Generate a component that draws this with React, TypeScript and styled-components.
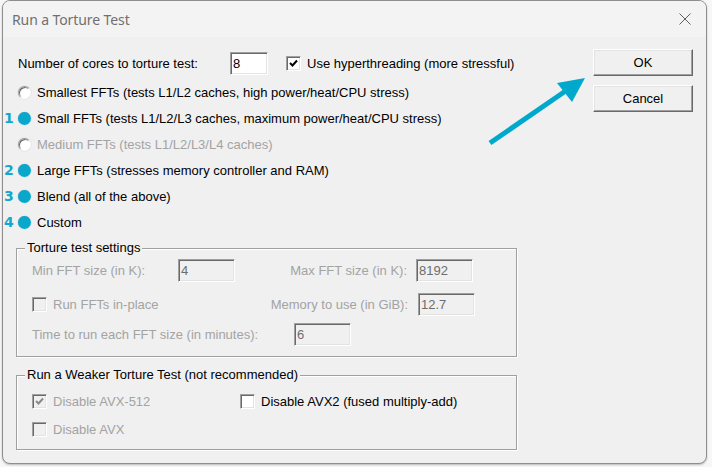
import styled, { createGlobalStyle } from 'styled-components';

const GlobalStyle = createGlobalStyle`
  html, body {
    margin: 0;
    padding: 0;
    background: #f7f7f7;
  }
  body {
    font-family: "Liberation Sans", Arial, sans-serif;
    font-size: 13px;
    color: #000;
  }
`;

interface RadioItem {
  label: string;
  note?: string;
  marked?: boolean;
  disabled?: boolean;
}

const radios: RadioItem[] = [
  { label: 'Smallest FFTs (tests L1/L2 caches, high power/heat/CPU stress)' },
  {
    label: 'Small FFTs (tests L1/L2/L3 caches, maximum power/heat/CPU stress)',
    note: '1',
    marked: true,
  },
  { label: 'Medium FFTs (tests L1/L2/L3/L4 caches)', disabled: true },
  { label: 'Large FFTs (stresses memory controller and RAM)', note: '2', marked: true },
  { label: 'Blend (all of the above)', note: '3', marked: true },
  { label: 'Custom', note: '4', marked: true },
];

const Check = ({ checked, disabled }: { checked?: boolean; disabled?: boolean }) => (
  <CheckBox $disabled={disabled}>
    {checked && (
      <svg width="9" height="9" viewBox="0 0 9 9">
        <polyline
          points="1,4 3.5,6.5 8,1.5"
          fill="none"
          stroke={disabled ? '#8a8a8a' : '#000'}
          strokeWidth="2"
        />
      </svg>
    )}
  </CheckBox>
);

const App = () => {
  return (
    <Stage>
      <GlobalStyle />
      <Window>
        {/* title */}
        <TitleBar>
          <Title>Run a Torture Test</Title>
          <svg width="12" height="12" viewBox="0 0 12 12">
            <path d="M0.5 0.5 L11.5 11.5 M11.5 0.5 L0.5 11.5" stroke="#5f5f5f" strokeWidth="1" />
          </svg>
        </TitleBar>

        <Body>
          <MainColumn>
            <TopRow>
              <FieldLabel $width={212}>Number of cores to torture test:</FieldLabel>
              <TextBox $width={38}>8</TextBox>
              <CheckRow style={{ marginLeft: 18 }}>
                <Check checked />
                <span>Use hyperthreading (more stressful)</span>
              </CheckRow>
            </TopRow>

            <RadioList>
              {radios.map((r) => (
                <RadioRow key={r.label} $disabled={r.disabled}>
                  <Note>{r.note}</Note>
                  <Radio $marked={r.marked} />
                  <span>{r.label}</span>
                </RadioRow>
              ))}
            </RadioList>

            {/* torture test settings */}
            <GroupBox $top={13} $pad="10px 0 10px 15px">
              <GroupTitle>Torture test settings</GroupTitle>
              <GroupRow>
                <FieldLabel $width={146} $disabled>Min FFT size (in K):</FieldLabel>
                <TextBox $width={57} $disabled>4</TextBox>
                <FieldLabel $width={172} $disabled $right>Max FFT size (in K):</FieldLabel>
                <TextBox $width={57} $disabled style={{ marginLeft: 9 }}>8192</TextBox>
              </GroupRow>
              <GroupRow $gap={11}>
                <CheckRow $disabled $width={236}>
                  <Check disabled />
                  <span>Run FFTs in-place</span>
                </CheckRow>
                <FieldLabel $width={140} $disabled $right>Memory to use (in GiB):</FieldLabel>
                <TextBox $width={57} $disabled style={{ marginLeft: 10 }}>12.7</TextBox>
              </GroupRow>
              <GroupRow $gap={7}>
                <FieldLabel $width={262} $disabled>Time to run each FFT size (in minutes):</FieldLabel>
                <TextBox $width={57} $disabled>6</TextBox>
              </GroupRow>
            </GroupBox>

            {/* weaker test */}
            <GroupBox $top={18} $pad="18px 0 12px 15px">
              <GroupTitle>Run a Weaker Torture Test (not recommended)</GroupTitle>
              <CheckGrid>
                <CheckRow $disabled $width={208}>
                  <Check checked disabled />
                  <span>Disable AVX-512</span>
                </CheckRow>
                <CheckRow>
                  <Check />
                  <span>Disable AVX2 (fused multiply-add)</span>
                </CheckRow>
              </CheckGrid>
              <CheckGrid $gap={13}>
                <CheckRow $disabled>
                  <Check disabled />
                  <span>Disable AVX</span>
                </CheckRow>
              </CheckGrid>
            </GroupBox>
          </MainColumn>

          <ButtonColumn>
            <PushButton>OK</PushButton>
            <PushButton>Cancel</PushButton>
          </ButtonColumn>
        </Body>
      </Window>

      {/* annotation arrow */}
      <Overlay width="712" height="467" viewBox="0 0 712 467">
        <line x1="490" y1="143" x2="567" y2="90" stroke="#00a9cc" strokeWidth="5" />
        <polygon points="585,78 557,83 572,102" fill="#00a9cc" />
      </Overlay>
    </Stage>
  );
};

// layout
const Stage = styled.div`
  position: relative;
  width: 712px;
  height: 467px;
  overflow: hidden;
  padding: 0 0 0 2px;
  box-sizing: border-box;
`;

const Window = styled.div`
  width: 705px;
  height: 464px;
  box-sizing: border-box;
  border: 1px solid #8e8e8e;
  border-radius: 8px;
  background: #f0f0f0;
  overflow: hidden;
  display: flex;
  flex-direction: column;
  box-shadow: 0 1px 2px rgba(0, 0, 0, 0.25);
`;

const TitleBar = styled.div`
  height: 36px;
  flex: none;
  display: flex;
  align-items: center;
  justify-content: space-between;
  padding: 0 15px 0 9px;
  background: #f3f3f3;
`;

const Title = styled.span`
  font-family: "Noto Sans", "Open Sans", sans-serif;
  font-size: 14px;
  color: #707070;
  letter-spacing: -0.1px;
`;

const Body = styled.div`
  display: flex;
  padding: 12px 13px 0 0;
`;

const MainColumn = styled.div`
  flex: 1;
  display: flex;
  flex-direction: column;
`;

const ButtonColumn = styled.div`
  display: flex;
  flex-direction: column;
  gap: 9px;
`;

const TopRow = styled.div`
  display: flex;
  align-items: center;
  height: 26px;
  margin-top: 1px;
  padding-left: 15px;
`;

const RadioList = styled.div`
  display: flex;
  flex-direction: column;
  margin-top: 3px;
`;

const RadioRow = styled.div<{ $disabled?: boolean }>`
  display: flex;
  align-items: center;
  height: 26px;
  color: ${(p) => (p.$disabled ? '#a3a3a3' : '#000')};
`;

const GroupBox = styled.div<{ $top: number; $pad: string }>`
  position: relative;
  width: 501px;
  box-sizing: border-box;
  margin: ${(p) => p.$top}px 0 0 13px;
  padding: ${(p) => p.$pad};
  border: 1px solid #a0a0a0;
  box-shadow: 1px 1px 0 #fff, inset 1px 1px 0 #fff;
`;

const GroupRow = styled.div<{ $gap?: number }>`
  display: flex;
  align-items: center;
  height: 23px;
  margin-top: ${(p) => p.$gap || 0}px;
`;

const CheckGrid = styled.div<{ $gap?: number }>`
  display: flex;
  align-items: center;
  height: 15px;
  margin-top: ${(p) => p.$gap || 0}px;
`;

// text
const GroupTitle = styled.span`
  position: absolute;
  top: -9px;
  left: 8px;
  padding: 0 2px;
  background: #f0f0f0;
  line-height: 16px;
`;

const FieldLabel = styled.span<{ $width: number; $disabled?: boolean; $right?: boolean }>`
  width: ${(p) => p.$width}px;
  flex: none;
  text-align: ${(p) => (p.$right ? 'right' : 'left')};
  color: ${(p) => (p.$disabled ? '#a3a3a3' : '#000')};
  white-space: nowrap;
`;

const Note = styled.span`
  width: 15px;
  flex: none;
  padding-left: 1px;
  box-sizing: border-box;
  font-family: "DejaVu Sans", sans-serif;
  font-weight: bold;
  font-size: 14px;
  color: #14a6cf;
`;

// component
const TextBox = styled.div<{ $width: number; $disabled?: boolean }>`
  width: ${(p) => p.$width}px;
  height: 23px;
  flex: none;
  box-sizing: border-box;
  padding: 0 2px;
  display: flex;
  align-items: center;
  background: ${(p) => (p.$disabled ? '#f0f0f0' : '#fff')};
  color: ${(p) => (p.$disabled ? '#6d6d6d' : '#000')};
  border: 1px solid;
  border-color: #a0a0a0 #fff #fff #a0a0a0;
  box-shadow: inset 1px 1px 0 #696969, inset -1px -1px 0 #e3e3e3;
`;

const CheckRow = styled.div<{ $disabled?: boolean; $width?: number }>`
  display: flex;
  align-items: center;
  gap: 6px;
  ${(p) => (p.$width ? `width: ${p.$width}px; flex: none;` : '')}
  color: ${(p) => (p.$disabled ? '#a3a3a3' : '#000')};
`;

const CheckBox = styled.span<{ $disabled?: boolean }>`
  width: 15px;
  height: 15px;
  flex: none;
  box-sizing: border-box;
  display: flex;
  align-items: center;
  justify-content: center;
  background: ${(p) => (p.$disabled ? '#f0f0f0' : '#fff')};
  border: 1px solid;
  border-color: #a0a0a0 #fff #fff #a0a0a0;
  box-shadow: inset 1px 1px 0 #696969, inset -1px -1px 0 #e3e3e3;
`;

const Radio = styled.span<{ $marked?: boolean }>`
  position: relative;
  width: 13px;
  height: 13px;
  flex: none;
  margin: 0 6px 0 0;
  box-sizing: border-box;
  border-radius: 50%;
  background: #fff;
  border: 1px solid;
  border-color: #a0a0a0 #fff #fff #a0a0a0;
  box-shadow: inset 1px 1px 0 #696969, 0 0 0 0.5px #d8d8d8;

  &::after {
    content: '';
    display: ${(p) => (p.$marked ? 'block' : 'none')};
    position: absolute;
    inset: -1px;
    border-radius: 50%;
    background: #0aa7cd;
  }
`;

const PushButton = styled.button`
  width: 100px;
  height: 27px;
  box-sizing: border-box;
  padding: 0;
  font-family: "Liberation Sans", Arial, sans-serif;
  font-size: 13px;
  color: #000;
  background: #f0f0f0;
  border: 1px solid;
  border-color: #fff #696969 #696969 #fff;
  box-shadow: inset -1px -1px 0 #a0a0a0, inset 1px 1px 0 #e3e3e3;
`;

const Overlay = styled.svg`
  position: absolute;
  left: 0;
  top: 0;
  pointer-events: none;
`;

export default App;
